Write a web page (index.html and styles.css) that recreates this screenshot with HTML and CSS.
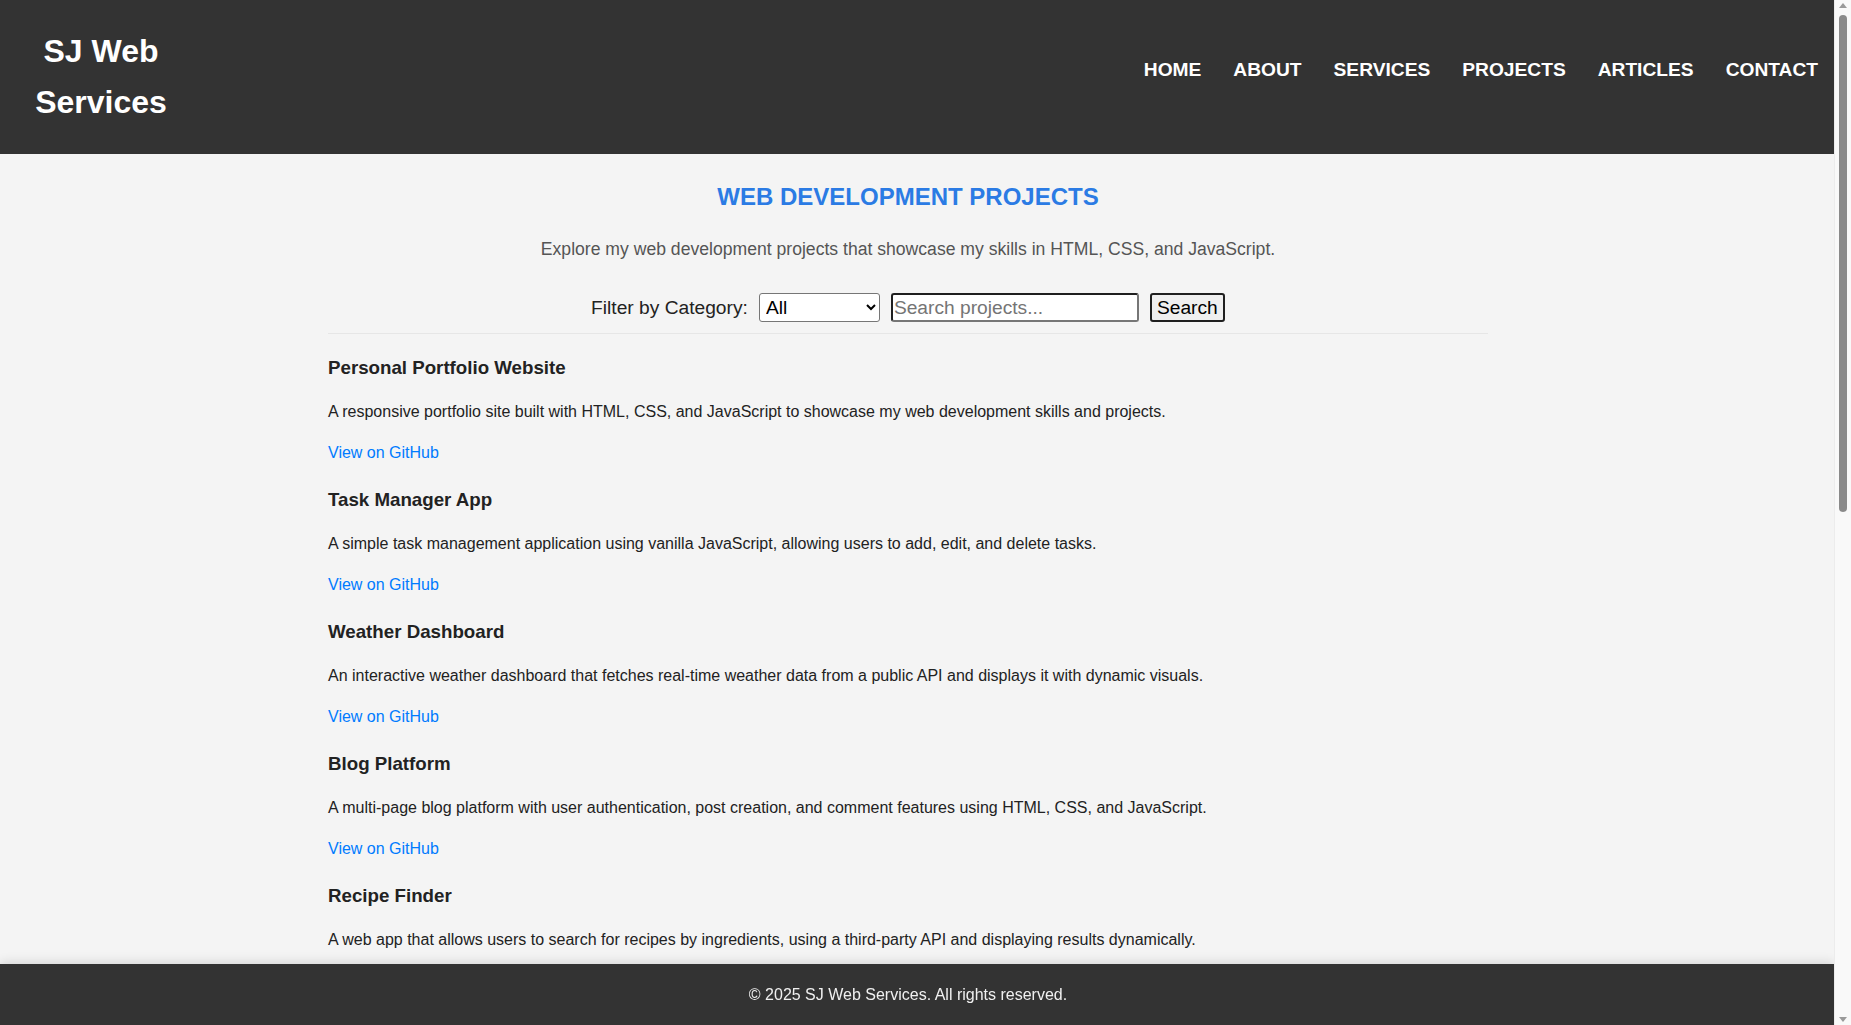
FILE: index.html
```html
<!DOCTYPE html>
<html lang="en">
<head>
<meta charset="utf-8">
<title>Projects | SJ Web Services</title>
<link rel="stylesheet" href="styles.css">
</head>
<body>
<header class="site-header">
  <div class="logo">SJ Web Services</div>
  <nav class="main-nav">
    <a href="#">HOME</a>
    <a href="#">ABOUT</a>
    <a href="#">SERVICES</a>
    <a href="#">PROJECTS</a>
    <a href="#">ARTICLES</a>
    <a href="#">CONTACT</a>
  </nav>
</header>

<main class="page">
  <section class="projects">
    <h2 class="projects-title">WEB DEVELOPMENT PROJECTS</h2>
    <p class="projects-intro">Explore my web development projects that showcase my skills in HTML, CSS, and JavaScript.</p>
    <div class="filter-row">
      <label class="filter-label" for="cat">Filter by Category:</label>
      <select id="cat" class="filter-select">
        <option>All</option>
        <option>Frontend</option>
        <option>JavaScript</option>
      </select>
      <input class="filter-input" type="text" placeholder="Search projects...">
      <button class="filter-button" type="button">Search</button>
    </div>

    <div class="project-list">
      <div class="project">
        <h3 class="project-name">Personal Portfolio Website</h3>
        <p class="project-desc">A responsive portfolio site built with HTML, CSS, and JavaScript to showcase my web development skills and projects.</p>
        <p class="project-link"><a href="#">View on GitHub</a></p>
      </div>
      <div class="project">
        <h3 class="project-name">Task Manager App</h3>
        <p class="project-desc">A simple task management application using vanilla JavaScript, allowing users to add, edit, and delete tasks.</p>
        <p class="project-link"><a href="#">View on GitHub</a></p>
      </div>
      <div class="project">
        <h3 class="project-name">Weather Dashboard</h3>
        <p class="project-desc">An interactive weather dashboard that fetches real-time weather data from a public API and displays it with dynamic visuals.</p>
        <p class="project-link"><a href="#">View on GitHub</a></p>
      </div>
      <div class="project">
        <h3 class="project-name">Blog Platform</h3>
        <p class="project-desc">A multi-page blog platform with user authentication, post creation, and comment features using HTML, CSS, and JavaScript.</p>
        <p class="project-link"><a href="#">View on GitHub</a></p>
      </div>
      <div class="project">
        <h3 class="project-name">Recipe Finder</h3>
        <p class="project-desc">A web app that allows users to search for recipes by ingredients, using a third-party API and displaying results dynamically.</p>
        <p class="project-link"><a href="#">View on GitHub</a></p>
      </div>
    </div>
  </section>
</main>

<footer class="site-footer">
  <p class="footer-text">&copy; 2025 SJ Web Services. All rights reserved.</p>
</footer>

<div class="scrollbar" aria-hidden="true">
  <span class="scroll-arrow scroll-arrow-up"></span>
  <span class="scroll-thumb"></span>
  <span class="scroll-arrow scroll-arrow-down"></span>
</div>
</body>
</html>
```

FILE: styles.css
```css
* {
  box-sizing: border-box;
}

html {
  background: #f4f4f4;
}

body {
  margin: 0 17px 0 0;
  background: #f4f4f4;
  font-family: "Liberation Sans", Arial, sans-serif;
  color: #222;
}

/* Header */
.site-header {
  height: 154px;
  background: #333;
  color: #fff;
  display: flex;
  justify-content: space-between;
  align-items: center;
  padding: 0 16px 0 20px;
}

.logo {
  width: 162px;
  text-align: center;
  font-size: 32px;
  font-weight: bold;
  line-height: 51px;
  color: #fff;
}

.main-nav {
  display: flex;
  gap: 32px;
  margin-bottom: 14px;
}

.main-nav a {
  color: #fff;
  text-decoration: none;
  font-size: 19.2px;
  font-weight: bold;
  line-height: 22px;
}

/* Main */
.page {
  padding: 0 18px 95px 0;
}

.projects {
  width: 1160px;
  margin: 0 auto;
  padding-top: 29px;
}

.projects-title {
  margin: 0;
  text-align: center;
  font-size: 24px;
  line-height: 28px;
  color: #2b7be4;
}

.projects-intro {
  margin: 26px 0 0;
  text-align: center;
  font-size: 17.6px;
  line-height: 24px;
  color: #555;
}

.filter-row {
  margin-top: 32px;
  padding-bottom: 11px;
  border-bottom: 1px solid #e6e6e6;
  display: flex;
  justify-content: center;
  align-items: center;
  gap: 11px;
  font-size: 19.2px;
}

.filter-label {
  color: #222;
}

.filter-select {
  width: 121px;
  height: 29px;
  font-family: "Liberation Sans", Arial, sans-serif;
  font-size: 19.2px;
  color: #000;
  background: #fff;
  border: 1px solid #767676;
  border-radius: 3px;
  padding: 0 2px;
}

.filter-input {
  width: 248px;
  height: 29px;
  font-family: "Liberation Sans", Arial, sans-serif;
  font-size: 19.2px;
  background: #fff;
  border-width: 2px;
  border-style: solid;
  border-color: #1f1f1f #767676 #767676 #1f1f1f;
  border-radius: 3px;
  padding: 0 1px;
}

.filter-input::placeholder {
  color: #757575;
}

.filter-button {
  width: 75px;
  height: 29px;
  font-family: "Liberation Sans", Arial, sans-serif;
  font-size: 19.2px;
  color: #000;
  background: #efefef;
  border: 2px solid #1f1f1f;
  border-radius: 3px;
  padding: 0 4px;
}

/* Projects */
.project-list {
  padding-top: 23px;
}

.project {
  margin-bottom: 26px;
}

.project-name {
  margin: 0 0 23px;
  font-size: 18.72px;
  line-height: 22px;
  color: #222;
}

.project-desc {
  margin: 0 0 21px;
  font-size: 16px;
  line-height: 20px;
  color: #222;
}

.project-link {
  margin: 0;
  font-size: 16px;
  line-height: 20px;
}

.project-link a {
  color: #007bff;
  text-decoration: none;
}

/* Footer */
.site-footer {
  position: fixed;
  left: 0;
  right: 17px;
  bottom: 0;
  height: 61px;
  background: #333;
  box-shadow: 0 -2px 10px rgba(0, 0, 0, 0.12);
  display: flex;
  align-items: center;
  justify-content: center;
  padding: 1px 18px 0 0;
}

.footer-text {
  margin: 0;
  color: #f0f0f0;
  font-size: 16px;
  line-height: 20px;
}

/* Window scrollbar (drawn) */
.scrollbar {
  position: fixed;
  top: 0;
  right: 0;
  bottom: 0;
  width: 17px;
  background: #f9f9f9;
  border-left: 1px solid #ececec;
}

.scroll-thumb {
  position: absolute;
  top: 15px;
  left: 4px;
  width: 8px;
  height: 497px;
  border-radius: 4px;
  background: #8a8a8a;
}

.scroll-arrow {
  position: absolute;
  left: 4px;
  width: 0;
  height: 0;
  border-left: 4px solid transparent;
  border-right: 4px solid transparent;
}

.scroll-arrow-up {
  top: 3px;
  border-bottom: 5px solid #9a9a9a;
}

.scroll-arrow-down {
  bottom: 3px;
  border-top: 5px solid #9a9a9a;
}
```
